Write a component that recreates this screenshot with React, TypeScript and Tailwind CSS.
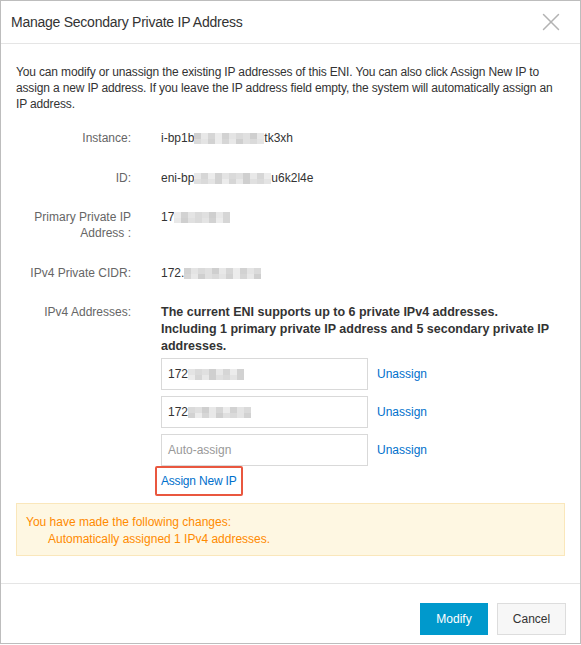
import React from "react";
import { X } from "lucide-react";

const blurShades = ["#d6d6d6", "#e4e4e4", "#cfcfcf", "#ececec", "#dadada", "#e8e8e8", "#d2d2d2", "#e0e0e0"];

// pixelated placeholder for masked values
const Blur = ({ cells, seed = 0 }: { cells: number; seed?: number }) => (
  <span className="inline-flex flex-col align-middle">
    <span className="flex">
      {Array.from({ length: cells }).map((_, i) => (
        <span key={i} className="block w-[7px] h-[6px]" style={{ background: blurShades[(i * 3 + seed) % blurShades.length] }} />
      ))}
    </span>
    <span className="flex">
      {Array.from({ length: cells }).map((_, i) => (
        <span key={i} className="block w-[7px] h-[5px]" style={{ background: blurShades[(i * 5 + seed + 2) % blurShades.length] }} />
      ))}
    </span>
  </span>
);

const Row = ({ label, children }: { label: React.ReactNode; children: React.ReactNode }) => (
  <div className="flex mb-[23.5px]">
    <div className="w-[115px] shrink-0 text-right text-[#666] leading-4">{label}</div>
    <div className="pl-[30px] flex-1 leading-4 text-[#333]">{children}</div>
  </div>
);

const ipRows = [
  { value: <>172<Blur cells={8} seed={1} /></>, placeholder: false },
  { value: <>172<Blur cells={9} seed={4} /></>, placeholder: false },
  { value: "Auto-assign", placeholder: true },
];

export default function App() {
  return (
    <div
      className="w-[581px] h-[644px] border border-[#bdbdbd] bg-white flex flex-col text-[12px] text-[#333]"
      style={{ fontFamily: '"Liberation Sans", Arial, sans-serif' }}
    >
      {/* Header */}
      <div className="h-[43px] border-b border-[#e5e5e5] flex items-center justify-between pl-[10px] pr-[14px] shrink-0">
        <h2 className="text-[14px] tracking-[-0.25px] text-[#333]">Manage Secondary Private IP Address</h2>
        <X size={30} strokeWidth={1.15} className="text-[#b3b3b3]" />
      </div>

      {/* Body */}
      <div className="flex-1 px-[15px] pt-[20px]">
        <p className="leading-4 mb-[18px] tracking-[-0.15px]">
          You can modify or unassign the existing IP addresses of this ENI. You can also click Assign New IP to assign a
          new IP address. If you leave the IP address field empty, the system will automatically assign an IP address.
        </p>

        <Row label="Instance:">
          i-bp1b<Blur cells={10} seed={2} />tk3xh
        </Row>
        <Row label="ID:">
          eni-bp<Blur cells={11} seed={5} />u6k2l4e
        </Row>
        <Row label="Primary Private IP Address :">
          17<Blur cells={8} seed={3} />
        </Row>
        <Row label="IPv4 Private CIDR:">
          172.<Blur cells={11} seed={6} />
        </Row>

        <div className="flex">
          <div className="w-[115px] shrink-0 text-right text-[#666] leading-4">IPv4 Addresses:</div>
          <div className="pl-[30px] flex-1">
            <p className="font-bold leading-[17px] text-[12.5px] text-[#333]">
              The current ENI supports up to 6 private IPv4 addresses.
              <br />
              Including 1 primary private IP address and 5 secondary private IP addresses.
            </p>
            <div className="mt-[3px] flex flex-col gap-[6px]">
              {ipRows.map((r, i) => (
                <div key={i} className="flex items-center">
                  <div
                    className={`w-[207px] h-[32px] border border-[#d9d9d9] flex items-center px-[6px] ${
                      r.placeholder ? "text-[#999]" : "text-[#333]"
                    }`}
                  >
                    {r.value}
                  </div>
                  <a className="ml-[9px] text-[#0070cc]">Unassign</a>
                </div>
              ))}
            </div>
            <div className="-ml-[6px] inline-flex items-center h-[30px] border-2 border-[#e9573f] rounded-[2px] pl-[4px] pr-[5px]">
              <a className="text-[#0070cc] tracking-[-0.2px]">Assign New IP</a>
            </div>
          </div>
        </div>

        <div className="mt-[7px] h-[53px] bg-[#fef7e2] border border-[#fae7bb] px-[9px] pt-[10px] text-[#ff8a00] leading-[17px]">
          <div>You have made the following changes:</div>
          <div className="pl-[22px]">Automatically assigned 1 IPv4 addresses.</div>
        </div>
      </div>

      {/* Footer */}
      <div className="h-[60px] border-t border-[#e5e5e5] flex justify-end items-start pt-[19px] pr-[14px] gap-[9px] shrink-0">
        <button className="w-[68px] h-[32px] bg-[#0099cc] text-white">Modify</button>
        <button className="w-[69px] h-[32px] bg-[#f7f7f7] border border-[#dddddd] text-[#333]">Cancel</button>
      </div>
    </div>
  );
}
